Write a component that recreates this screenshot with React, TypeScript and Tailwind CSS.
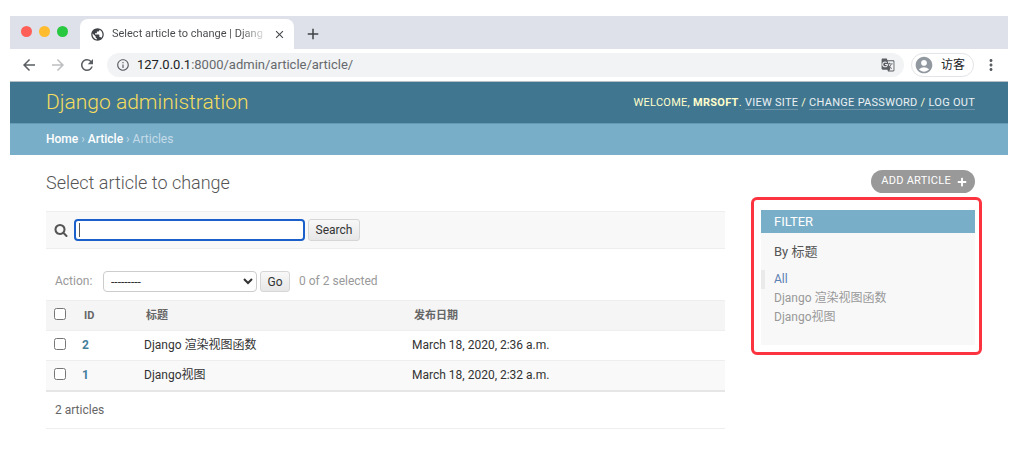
import type { ReactNode } from 'react';
import { FaPlus } from 'react-icons/fa';
import { MdGTranslate, MdPublic, MdArrowBack, MdArrowForward, MdRefresh, MdInfoOutline, MdMoreVert, MdClose, MdAdd, MdAccountCircle } from 'react-icons/md';

const articles = [
  { id: 2, title: 'Django 渲染视图函数', date: 'March 18, 2020, 2:36 a.m.' },
  { id: 1, title: 'Django视图', date: 'March 18, 2020, 2:32 a.m.' },
];

function BrowserBar() {
  return (
    <div className="border-b border-[#b4bfc6]">
      <div className="flex h-[33px] items-end bg-[#dee1e9]">
        <div className="flex w-[70px] gap-[7px] self-start pt-[10px] pl-[11px]">
          <span className="size-[11px] rounded-full bg-[#ff5f57]" />
          <span className="size-[11px] rounded-full bg-[#febc2e]" />
          <span className="size-[11px] rounded-full bg-[#28c840]" />
        </div>
        <div className="flex h-[30px] w-[214px] items-center gap-[7px] rounded-t-lg bg-white pr-[8px] pl-[10px] text-[11px] text-[#45474a]">
          <MdPublic className="size-[15px] shrink-0 text-[#3f4246]" />
          <span className="flex-1 whitespace-nowrap">
            <span className="bg-linear-to-r from-[#45474a] from-85% to-[#45474a]/20 bg-clip-text text-transparent">Select article to change | Djang</span>
          </span>
          <button aria-label="Close tab"><MdClose className="size-[13px]" /></button>
        </div>
        <button aria-label="New tab" className="flex h-[30px] w-[38px] items-center justify-center text-[#3f4246]">
          <MdAdd className="size-[18px]" />
        </button>
      </div>
      <div className="flex h-8 items-center text-[#5a5d61]">
        <div className="flex w-[97px] shrink-0 items-center gap-[11px] pl-[10px]">
          <button aria-label="Back"><MdArrowBack className="size-[18px]" /></button>
          <button aria-label="Forward" className="text-[#bcbec0]"><MdArrowForward className="size-[18px]" /></button>
          <button aria-label="Reload"><MdRefresh className="size-[18px]" /></button>
        </div>
        <div className="flex h-6 flex-1 items-center gap-[7px] rounded-full bg-[#f1f3f4] px-[9px]">
          <MdInfoOutline className="size-[14px]" />
          <span className="flex-1 text-[13px] text-[#66696d]"><span className="text-[#202124]">127.0.0.1</span>:8000/admin/article/article/</span>
          <button aria-label="Translate"><MdGTranslate className="size-[14px]" /></button>
        </div>
        <button className="ml-[7px] flex h-6 w-[63px] items-center gap-[7px] rounded-full border border-[#e2e4e7] pl-[2px] text-xs text-[#202124]">
          <MdAccountCircle className="size-5 text-[#9298a0]" />访客
        </button>
        <button aria-label="More" className="flex w-[34px] justify-center"><MdMoreVert className="size-[18px]" /></button>
      </div>
    </div>
  );
}

function SearchIcon() {
  return (
    <svg viewBox="0 0 1792 1792" className="size-[14px] fill-[#555555]" aria-hidden="true">
      <path d="M1216 832q0-185-131.5-316.5t-316.5-131.5-316.5 131.5-131.5 316.5 131.5 316.5 316.5 131.5 316.5-131.5 131.5-316.5zm512 832q0 52-38 90t-90 38q-54 0-90-38l-343-342q-179 124-399 124-143 0-273.5-55.5t-225-150-150-225-55.5-273.5 55.5-273.5 150-225 225-150 273.5-55.5 273.5 55.5 225 150 150 225 55.5 273.5q0 220-124 399l343 343q37 37 37 90z" />
    </svg>
  );
}

function HeaderLink({ children }: { children: ReactNode }) {
  return <a href="#" className="border-b border-[#6c93a8] text-white/90">{children}</a>;
}

function Results() {
  return (
    <table className="w-full table-fixed border-b-2 border-[#e6e6e6] text-left text-xs leading-4">
      <colgroup>
        <col className="w-[28px]" />
        <col className="w-[61px]" />
        <col className="w-[268px]" />
        <col />
      </colgroup>
      <thead>
        <tr className="h-[30px] border-y border-[#eeeeee] bg-[#f5f5f5] align-top text-[11px] text-[#666666]">
          <th className="pt-[7px] pl-2"><input type="checkbox" aria-label="Select all articles" className="m-0 block size-3" /></th>
          <th className="pt-[7px] pl-[10px]">ID</th>
          <th className="pt-[7px] pl-[11px]">标题</th>
          <th className="pt-[7px] pl-[11px]">发布日期</th>
        </tr>
      </thead>
      <tbody className="text-[#333333]">
        {articles.map((a) => (
          <tr key={a.id} className="h-[30px] border-b border-[#eeeeee] align-top even:bg-[#f9f9f9]">
            <td className="pt-[7px] pl-2"><input type="checkbox" aria-label={`Select article ${a.id}`} className="m-0 block size-3" /></td>
            <th className="pt-[6px] pl-2"><a href="#" className="text-[#447e9b]">{a.id}</a></th>
            <td className="pt-[6px] pl-[9px]">{a.title}</td>
            <td className="pt-[6px] pl-[9px]">{a.date}</td>
          </tr>
        ))}
      </tbody>
    </table>
  );
}

function Filter() {
  return (
    <aside className="mt-[2px] -mr-[7px] -ml-[10px] rounded-md border-[3px] border-[#fb3440] pt-[10px] pr-[4px] pb-[7px] pl-[7px]">
      <div className="min-h-[135px] bg-[#f8f8f8]">
        <h2 className="bg-[#79aec8] px-[13px] text-[13px] leading-[23px] text-white">FILTER</h2>
        <h3 className="px-[13px] pt-[9px] text-[13px] leading-5 text-[#555555]">By 标题</h3>
        <ul className="mt-[8px] text-xs leading-[19px] text-[#999999]">
          <li className="border-l-4 border-[#eaeaea] pl-[9px]"><a href="#" className="text-[#5b80b2]">All</a></li>
          <li className="pl-[13px]"><a href="#">Django 渲染视图函数</a></li>
          <li className="pl-[13px]"><a href="#">Django视图</a></li>
        </ul>
      </div>
    </aside>
  );
}

const button = 'rounded-[3px] border border-[#d6d6d6] bg-linear-to-b from-[#f8f8f8] to-[#e7e7e7] text-xs text-[#333333]';

export default function App() {
  return (
    <div className="min-h-screen bg-white pt-4 pr-[11px] pl-[10px] font-[Roboto,'Noto_Sans_CJK_SC',sans-serif]">
      <BrowserBar />
      <header className="flex h-[41px] items-center justify-between bg-[#417690] pr-[33px] pl-9">
        <h1 className="text-[21px] font-light text-[#f5dd5d]">Django administration</h1>
        <div className="text-[11px] leading-[13px] tracking-wide text-[#ffffcc]">
          WELCOME, <strong>MRSOFT</strong>. <HeaderLink>VIEW SITE</HeaderLink> / <HeaderLink>CHANGE PASSWORD</HeaderLink> / <HeaderLink>LOG OUT</HeaderLink>
        </div>
      </header>
      <nav className="h-8 border-t border-[#6699b2] bg-[#79aec8] pl-9 text-xs leading-[31px] text-[#c4dce8]">
        <a href="#" className="font-medium text-white">Home</a> › <a href="#" className="font-medium text-white">Article</a> › Articles
      </nav>
      <main className="pr-[33px] pl-9">
        <div className="flex h-[56px] items-start justify-between pt-[15px]">
          <h1 className="text-lg leading-[26px] font-light text-[#555555]">Select article to change</h1>
          <a href="#" className="flex h-[23px] items-center gap-[6px] rounded-full bg-[#999999] pr-2 pl-[10px] text-[11px] tracking-wide text-white">
            ADD ARTICLE <FaPlus className="size-[10px]" />
          </a>
        </div>
        <div className="flex gap-9">
          <section className="min-w-0 flex-1">
            <form className="flex h-[38px] items-center border-y border-[#eeeeee] bg-[#f8f8f8] pl-2">
              <label htmlFor="search" aria-label="Search articles"><SearchIcon /></label>
              <div className="relative ml-[6px]">
                <input id="search" className="block h-[22px] w-[231px] rounded-sm border-2 border-[#1b5fca] bg-white px-1 text-xs outline-none" />
                <span className="pointer-events-none absolute top-1 left-[5px] h-[14px] w-px bg-[#555555]" />
              </div>
              <button type="button" className={`${button} ml-[3px] h-[22px] w-[52px]`}>Search</button>
            </form>
            <div className="flex h-[51px] items-end pb-[8px] pl-[9px] text-xs text-[#999999]">
              <label htmlFor="action" className="w-12 leading-[22px]">Action:</label>
              <select id="action" className="h-[21px] w-[154px] rounded-sm border border-[#cccccc] bg-white pl-[3px] text-xs text-[#333333]">
                <option>---------</option>
              </select>
              <button type="button" className={`${button} ml-[3px] h-[21px] w-[30px]`}>Go</button>
              <span className="ml-[9px] leading-[22px]">0 of 2 selected</span>
            </div>
            <Results />
            <p className="border-b border-[#eeeeee] pl-[9px] text-xs leading-[36px] text-[#666666]">2 articles</p>
          </section>
          <div className="-mt-[16px] w-[214px] shrink-0"><Filter /></div>
        </div>
      </main>
    </div>
  );
}
